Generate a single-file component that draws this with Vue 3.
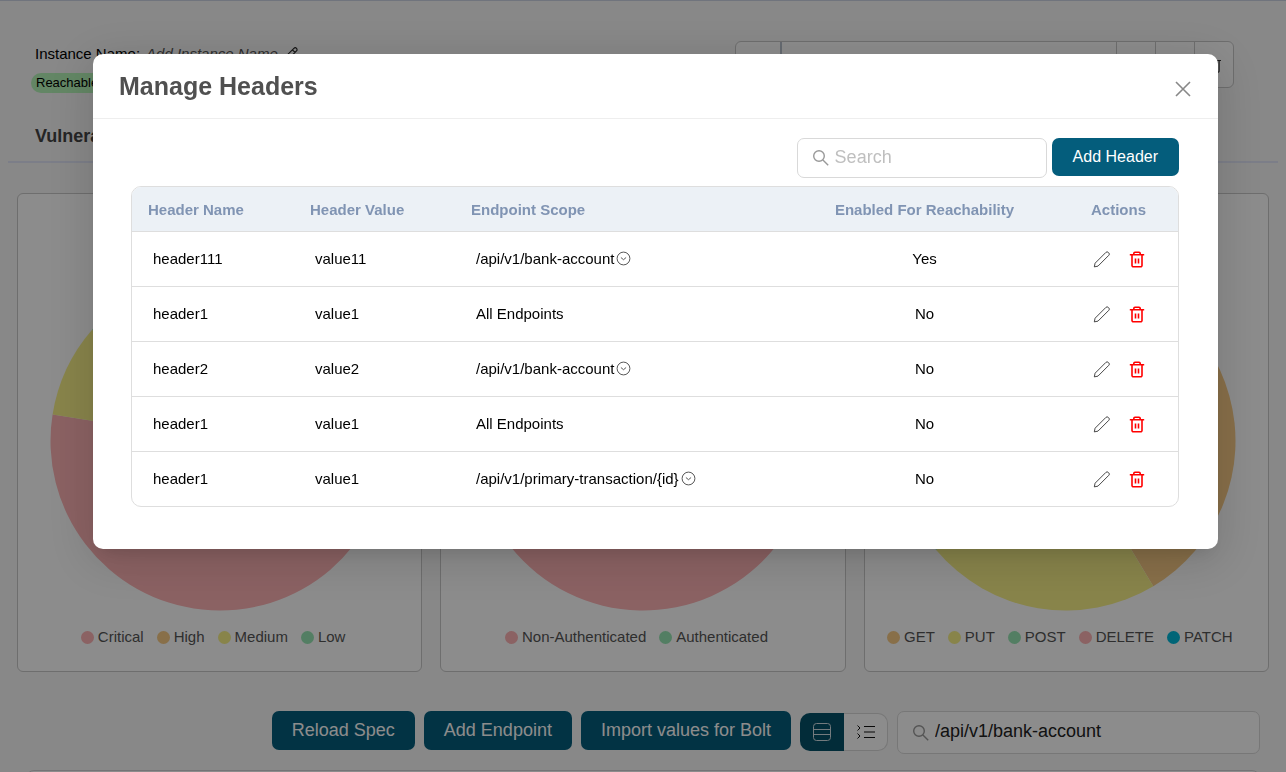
<template>
  <div class="page">
    <header class="instance">
      <div class="instance__info">
        <div class="instance__name">
          <span>Instance Name:</span>
          <em>Add Instance Name</em>
          <button type="button" class="icon__btn" aria-label="Edit instance name">
            <svg width="14" height="14" viewBox="0 0 16 16" fill="none" stroke="#222" stroke-width="1.3">
              <path d="M1 15l1-4.2L11.3 1.5a2 2 0 0 1 3 3L5.1 14zM9.6 3.2l3 3" />
            </svg>
          </button>
        </div>
        <span class="tag">Reachable</span>
      </div>
      <div class="instance__tools">
        <button type="button" class="tool tool--first" aria-label="Copy"></button>
        <button type="button" class="tool tool--wide" aria-label="Instance URL"></button>
        <button type="button" class="tool" aria-label="Refresh"></button>
        <button type="button" class="tool" aria-label="Settings"></button>
        <button type="button" class="tool" aria-label="Delete instance">
          <svg width="16" height="16" viewBox="0 0 16 16" fill="none" stroke="#333" stroke-width="1.2">
            <path d="M1 3.5h14M2.9 3.5V14a1.2 1.2 0 0 0 1.2 1.2h7.8a1.2 1.2 0 0 0 1.2-1.2V3.5M6.6 7v5M9.4 7v5" />
          </svg>
        </button>
      </div>
    </header>

    <nav class="tabs">
      <a href="#" class="tabs__link">Vulnerabilities</a>
    </nav>

    <section class="charts">
      <article v-for="chart in charts" :key="chart.id" class="chart">
        <svg class="chart__pie" width="340" height="340" viewBox="-170 -170 340 340">
          <path v-for="slice in chart.slices" :key="slice.to" :d="arc(slice.from, slice.to)" :fill="slice.color" />
        </svg>
        <ul class="legend">
          <li v-for="item in chart.legend" :key="item.label">
            <span class="legend__dot" :style="{ backgroundColor: item.color }"></span>
            {{ item.label }}
          </li>
        </ul>
      </article>
    </section>

    <section class="toolbar">
      <button type="button" class="btn btn--large">Reload Spec</button>
      <button type="button" class="btn btn--large">Add Endpoint</button>
      <button type="button" class="btn btn--large">Import values for Bolt</button>
      <div class="toggle">
        <button type="button" class="toggle__btn toggle__btn--active" aria-label="Table view">
          <svg width="20" height="20" viewBox="0 0 20 20" fill="none" stroke="#d4e0e5" stroke-width="1">
            <rect x="1.5" y="1.5" width="17" height="17" rx="3" />
            <path d="M1.5 7.5h17M1.5 12.5h17" />
          </svg>
        </button>
        <button type="button" class="toggle__btn" aria-label="List view">
          <svg width="20" height="20" viewBox="0 0 20 20" fill="none" stroke="#111" stroke-width="1">
            <path d="M8 4.5h11M8 10h11M8 15.5h11M1.5 3.5L4 6 1.5 8.5M1.5 11.5L4 14l-2.5 2.5" />
          </svg>
        </button>
      </div>
      <label class="search search--endpoint">
        <svg width="18" height="18" viewBox="0 0 18 18" fill="none" stroke="#999" stroke-width="1.4">
          <circle cx="7" cy="7" r="5.3" />
          <path d="M10.9 10.9l5.3 5.3" />
        </svg>
        <input v-model="endpointSearch" type="text" aria-label="Search endpoints" />
      </label>
    </section>
    <section class="panel"></section>
  </div>

  <div class="modal-overlay">
    <div class="modal" role="dialog" aria-labelledby="modal-title">
      <div class="modal__header">
        <h2 id="modal-title">Manage Headers</h2>
        <button type="button" class="icon__btn modal__close" aria-label="Close">
          <svg width="18" height="18" viewBox="0 0 18 18" fill="none" stroke="#888" stroke-width="1.6">
            <path d="M2 2l14 14M16 2L2 16" />
          </svg>
        </button>
      </div>

      <div class="modal__body">
        <div class="modal__actions">
          <label class="search">
            <svg width="18" height="18" viewBox="0 0 18 18" fill="none" stroke="#999" stroke-width="1.4">
              <circle cx="7" cy="7" r="5.3" />
              <path d="M10.9 10.9l5.3 5.3" />
            </svg>
            <input v-model="search" type="text" placeholder="Search" aria-label="Search headers" />
          </label>
          <button type="button" class="btn">Add Header</button>
        </div>

        <div class="table__wrapper">
          <table>
            <thead>
              <tr>
                <th class="col-name">Header Name</th>
                <th class="col-value">Header Value</th>
                <th class="col-scope">Endpoint Scope</th>
                <th class="col-enabled center">Enabled For Reachability</th>
                <th class="center">Actions</th>
              </tr>
            </thead>
            <tbody>
              <tr v-for="header in filteredHeaders" :key="header.id">
                <td>{{ header.name }}</td>
                <td>{{ header.value }}</td>
                <td>
                  <div class="scope">
                    <span>{{ header.scope || 'All Endpoints' }}</span>
                    <button v-if="header.scope" type="button" class="icon__btn" aria-label="Show endpoints">
                      <svg width="15" height="15" viewBox="0 0 15 15" fill="none" stroke="#444" stroke-width="0.9">
                        <circle cx="7.5" cy="7.5" r="6.4" />
                        <path d="M4.9 6.5l2.6 2.2 2.6-2.2" />
                      </svg>
                    </button>
                  </div>
                </td>
                <td class="center">{{ header.enabled ? 'Yes' : 'No' }}</td>
                <td>
                  <div class="actions">
                    <button type="button" class="icon__btn" aria-label="Edit header">
                      <svg width="18" height="18" viewBox="0 0 18 18" fill="none" stroke="#333" stroke-width="0.9" stroke-linejoin="round">
                        <path d="M1.3 16.9l.8-3.7L12.9 2.4a1.7 1.7 0 0 1 2.4 0l.5.5a1.7 1.7 0 0 1 0 2.4L5 16.1z" />
                      </svg>
                    </button>
                    <button type="button" class="icon__btn" aria-label="Delete header">
                      <svg width="16" height="18" viewBox="0 0 16 18" fill="none" stroke="#f00" stroke-width="1.6">
                        <path d="M.8 4.8h14.4M3 4.8v10.6a1.4 1.4 0 0 0 1.4 1.4h7.2a1.4 1.4 0 0 0 1.4-1.4V4.8M4.8 4.6V3.4a1.2 1.2 0 0 1 1.2-1.2h4a1.2 1.2 0 0 1 1.2 1.2v1.2M6.5 8.4v5M9.5 8.4v5" />
                      </svg>
                    </button>
                  </div>
                </td>
              </tr>
            </tbody>
          </table>
        </div>
      </div>
    </div>
  </div>
</template>

<script setup>
import { computed, ref } from 'vue';

const red = '#fdb2b4';
const orange = '#f7ca85';
const yellow = '#f7f088';
const green = '#98e6b4';
const blue = '#00b8d9';

const search = ref('');
const endpointSearch = ref('/api/v1/bank-account');

const headers = ref([
  { id: 1, name: 'header111', value: 'value11', scope: '/api/v1/bank-account', enabled: true },
  { id: 2, name: 'header1', value: 'value1', scope: '', enabled: false },
  { id: 3, name: 'header2', value: 'value2', scope: '/api/v1/bank-account', enabled: false },
  { id: 4, name: 'header1', value: 'value1', scope: '', enabled: false },
  { id: 5, name: 'header1', value: 'value1', scope: '/api/v1/primary-transaction/{id}', enabled: false }
]);

const filteredHeaders = computed(() =>
  headers.value.filter((header) => header.name.includes(search.value.trim()))
);

// slice angles are degrees, clockwise from the top
const charts = [
  {
    id: 'severity',
    slices: [
      { from: 0, to: 279, color: red },
      { from: 279, to: 311, color: yellow },
      { from: 311, to: 360, color: green }
    ],
    legend: [
      { label: 'Critical', color: red },
      { label: 'High', color: orange },
      { label: 'Medium', color: yellow },
      { label: 'Low', color: green }
    ]
  },
  {
    id: 'authentication',
    slices: [
      { from: 0, to: 300, color: red },
      { from: 300, to: 360, color: green }
    ],
    legend: [
      { label: 'Non-Authenticated', color: red },
      { label: 'Authenticated', color: green }
    ]
  },
  {
    id: 'method',
    slices: [
      { from: 0, to: 149, color: orange },
      { from: 149, to: 230, color: yellow },
      { from: 230, to: 300, color: green },
      { from: 300, to: 360, color: red }
    ],
    legend: [
      { label: 'GET', color: orange },
      { label: 'PUT', color: yellow },
      { label: 'POST', color: green },
      { label: 'DELETE', color: red },
      { label: 'PATCH', color: blue }
    ]
  }
];

const radius = 169.5;

const point = (angle) => {
  const rad = (angle * Math.PI) / 180;
  return `${radius * Math.sin(rad)} ${-radius * Math.cos(rad)}`;
};

const arc = (from, to) =>
  `M0 0L${point(from)}A${radius} ${radius} 0 ${to - from > 180 ? 1 : 0} 1 ${point(to)}Z`;
</script>

<style>
body {
  font-family: Arial, 'Liberation Sans', sans-serif;
  font-size: 15px;
  color: #000;
}
</style>

<style scoped>
* {
  box-sizing: border-box;
}

button,
input {
  font-family: inherit;
}

button {
  cursor: pointer;
}

.page {
  height: 100vh;
  overflow: hidden;
  background: #f7f7f7;
  border-top: 1px solid #ccd3e3;
}

.icon__btn {
  display: inline-flex;
  padding: 0;
  border: none;
  background: none;
}

.instance {
  display: flex;
  justify-content: space-between;
  align-items: flex-start;
  padding: 40px 52px 0 35px;
}

.instance__info {
  padding-top: 3px;
}

.instance__name {
  display: flex;
  align-items: center;
  gap: 6px;
  line-height: 20px;
}

.instance__name em {
  color: #555;
}

.tag {
  display: block;
  width: fit-content;
  margin: 9px 0 0 -4px;
  padding: 0 5px;
  border-radius: 10px;
  background: #b5f5b8;
  font-size: 13px;
  line-height: 20px;
}

.instance__tools {
  display: flex;
  width: 499px;
  height: 47px;
  border: 1px solid #c8c8c8;
  border-radius: 6px;
  background: #fff;
}

.tool {
  display: flex;
  align-items: center;
  justify-content: center;
  width: 39px;
  padding: 0;
  border: none;
  border-left: 1px solid #c8c8c8;
  background: none;
}

.tool--first {
  width: 44px;
  border-left: none;
}

.tool--wide {
  flex: 1;
  border-left: 2px solid #b9c2ce;
}

.tabs {
  margin: 31px 8px 0;
  padding: 0 27px 12px;
  border-bottom: 2px solid #e2e6f8;
  line-height: 24px;
}

.tabs__link {
  color: #444;
  font-size: 18px;
  font-weight: 700;
  text-decoration: none;
}

.charts {
  display: grid;
  grid-template-columns: repeat(3, 1fr);
  gap: 18px;
  margin: 30px 17px 0;
}

.chart {
  display: flex;
  flex-direction: column;
  align-items: center;
  gap: 16px;
  padding: 77px 0 24px;
  border: 1px solid #c8c8c8;
  border-radius: 6px;
  background: #fff;
}

.legend {
  display: flex;
  margin: 0;
  padding: 0;
  list-style: none;
  color: #555;
  line-height: 20px;
}

.legend li {
  display: flex;
  align-items: center;
  gap: 4px;
  margin-right: 13px;
}

.legend__dot {
  width: 13px;
  height: 13px;
  border-radius: 50%;
}

.toolbar {
  display: flex;
  justify-content: flex-end;
  align-items: flex-start;
  gap: 9px;
  margin-top: 39px;
  padding-right: 26px;
}

.btn {
  height: 38px;
  padding: 0 21px;
  border: none;
  border-radius: 7px;
  background: #045d7c;
  color: #fff;
  font-size: 16px;
}

.btn--large {
  height: 39px;
  padding: 0 20px;
  font-size: 18px;
}

.toggle {
  display: flex;
  margin-top: 2px;
}

.toggle__btn {
  display: flex;
  align-items: center;
  justify-content: center;
  width: 44px;
  height: 38px;
  padding: 0;
  border: 1px solid #d9d9d9;
  border-left: none;
  border-radius: 0 10px 10px 0;
  background: #fff;
}

.toggle__btn--active {
  border: none;
  border-radius: 10px 0 0 10px;
  background: #045168;
}

.search {
  display: flex;
  align-items: center;
  gap: 5px;
  width: 250px;
  height: 40px;
  padding: 0 14px;
  border: 1px solid #d9d9d9;
  border-radius: 7px;
  background: #fff;
}

.search input {
  flex: 1;
  min-width: 0;
  padding: 0 0 2px;
  border: none;
  outline: none;
  background: none;
  color: #222;
  font-size: 18px;
}

.search input::placeholder {
  color: #bfbfbf;
}

.search--endpoint {
  width: 363px;
  height: 43px;
}

.panel {
  height: 200px;
  margin: 16px 26px 0;
  border: 1px solid #d4d4d8;
  border-radius: 8px;
  background: #fff;
}

.modal-overlay {
  position: fixed;
  inset: 0;
  padding: 54px 68px 0 93px;
  background: rgba(0, 0, 0, 0.45);
}

.modal {
  border-radius: 10px;
  background: #fff;
  box-shadow:
    0 11px 15px -7px rgba(0, 0, 0, 0.1),
    0 9px 46px 8px rgba(0, 0, 0, 0.12);
}

.modal__header {
  display: flex;
  justify-content: space-between;
  align-items: center;
  padding: 16px 26px;
  border-bottom: 1px solid #eee;
}

.modal__header h2 {
  margin: 0;
  color: #505050;
  font-size: 25px;
  line-height: 32px;
}

.modal__close {
  padding-top: 6px;
}

.modal__body {
  padding: 19px 39px 42px 38px;
}

.modal__actions {
  display: flex;
  justify-content: flex-end;
  align-items: flex-start;
  gap: 5px;
  margin-bottom: 8px;
}

.table__wrapper {
  overflow: hidden;
  border: 1px solid #dedede;
  border-radius: 10px;
}

table {
  width: 100%;
  table-layout: fixed;
  border-collapse: separate;
  border-spacing: 0;
}

th,
td {
  border-bottom: 1px solid #dedede;
  text-align: left;
}

th {
  height: 45px;
  padding: 0 16px;
  background: #ecf1f6;
  color: #8094b3;
}

td {
  height: 55px;
  padding: 0 21px 1px;
}

tbody tr:last-child td {
  height: 54px;
  border-bottom: none;
}

th.center,
td.center {
  text-align: center;
}

.col-name {
  width: 162px;
}

.col-value {
  width: 161px;
}

.col-scope {
  width: 335px;
}

.col-enabled {
  width: 269px;
}

.scope {
  display: flex;
  align-items: center;
  gap: 2px;
}

.actions {
  display: flex;
  justify-content: center;
  align-items: center;
  gap: 18px;
}
</style>
